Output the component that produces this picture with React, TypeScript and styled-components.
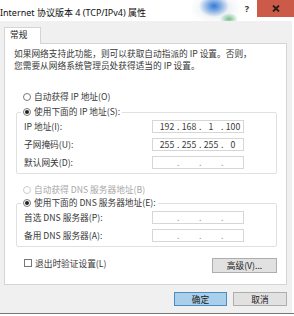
import styled, { createGlobalStyle } from "styled-components";

const GlobalStyle = createGlobalStyle`
  html, body {
    margin: 0;
    padding: 0;
    background: #ffffff;
  }
  * {
    box-sizing: border-box;
  }
`;

const FONT = `"Noto Sans CJK SC", "Noto Sans", sans-serif`;

const Window = styled.div`
  width: 294px;
  height: 316px;
  display: flex;
  flex-direction: column;
  background: #ffffff;
  font-family: ${FONT};
  font-size: 8.7px;
  color: #383838;
  overflow: hidden;
`;

const TitleBar = styled.div`
  height: 21px;
  display: flex;
  align-items: flex-start;
  background:
    radial-gradient(ellipse 9px 6px at 229px 19px, rgba(70, 170, 100, 0.75), rgba(70, 170, 100, 0) 100%),
    radial-gradient(ellipse 15px 11px at 214px 6px, rgba(30, 110, 215, 0.9), rgba(30, 110, 215, 0) 100%),
    radial-gradient(ellipse 26px 16px at 216px 8px, rgba(160, 180, 200, 0.35), rgba(160, 180, 200, 0) 100%),
    #ffffff;
`;

const Title = styled.div`
  flex: 1;
  padding: 7px 0 0 0;
  font-family: "Noto Sans", "Noto Sans CJK SC", sans-serif;
  font-size: 9px;
  line-height: 11px;
  color: #111;
  white-space: nowrap;
`;

const HelpButton = styled.div`
  width: 20px;
  height: 17px;
  display: flex;
  align-items: center;
  justify-content: center;
  font-family: "Noto Sans", sans-serif;
  font-weight: bold;
  font-size: 9px;
  color: #333;
`;

const CloseButton = styled.div`
  width: 37px;
  height: 17px;
  display: flex;
  align-items: center;
  justify-content: center;
  background: #cc5a49;
`;

const Body = styled.div`
  height: 292px;
  margin-right: 2px;
  background: #f0f0f0;
  padding: 6px 5px 0 4px;
  display: flex;
  flex-direction: column;
`;

const BottomLine = styled.div`
  height: 1px;
  background: #767676;
`;

const TabStrip = styled.div`
  display: flex;
  margin-bottom: -1px;
`;

const Tab = styled.div`
  position: relative;
  z-index: 1;
  width: 37px;
  height: 17px;
  background: #ffffff;
  border: 1px solid #d4d4d4;
  border-bottom: none;
  padding: 1px 0 0 5px;
  line-height: 12px;
  color: #1a1a1a;
`;

const Panel = styled.div`
  height: 242px;
  background: #ffffff;
  border: 1px solid #d4d4d4;
  padding: 4px 9px 0 9px;
  display: flex;
  flex-direction: column;
`;

const Description = styled.div`
  line-height: 12px;
  white-space: nowrap;
`;

const RadioRow = styled.label<{ $disabled?: boolean }>`
  display: flex;
  align-items: center;
  gap: 3px;
  height: 12px;
  line-height: 12px;
  white-space: nowrap;
  color: ${(p) => (p.$disabled ? "#a8a8a8" : "#383838")};
`;

const Radio = styled.span<{ $checked?: boolean; $disabled?: boolean }>`
  width: 8px;
  height: 8px;
  border-radius: 50%;
  border: 1px solid ${(p) => (p.$disabled ? "#cccccc" : "#7a7a7a")};
  background: #ffffff;
  display: flex;
  align-items: center;
  justify-content: center;
  &::after {
    content: "";
    width: 4px;
    height: 4px;
    border-radius: 50%;
    background: ${(p) => (p.$checked ? "#222" : "transparent")};
  }
`;

const AutoRow = styled.div<{ $top: number }>`
  margin: ${(p) => p.$top}px 0 0 9px;
`;

const Group = styled.fieldset<{ $top: number }>`
  margin: ${(p) => p.$top}px 0 0 2px;
  border: 1px solid #e0e0e0;
  border-radius: 2px;
  padding: 2px 7px 4px 7px;
  min-width: 0;
`;

const Legend = styled.legend`
  margin-left: -3px;
  padding: 0 2px;
  line-height: 12px;
`;

const Rows = styled.div`
  display: flex;
  flex-direction: column;
  gap: 5px;
`;

const FieldRow = styled.div`
  display: grid;
  grid-template-columns: 128px 92px;
  align-items: center;
  height: 13px;
`;

const FieldLabel = styled.span`
  white-space: nowrap;
  line-height: 13px;
`;

const IpBox = styled.div`
  height: 13px;
  border: 1px solid #d6d6d6;
  background: #ffffff;
  display: flex;
  align-items: center;
  padding-left: 4px;
`;

const Segment = styled.span`
  width: 20px;
  text-align: center;
  line-height: 11px;
  color: #3a3a3a;
`;

const Dot = styled.span<{ $empty?: boolean }>`
  width: 2px;
  text-align: center;
  line-height: 11px;
  color: ${(p) => (p.$empty ? "#9a9a9a" : "#3a3a3a")};
`;

const FooterRow = styled.div`
  margin-top: 11px;
  display: flex;
  justify-content: space-between;
  align-items: flex-start;
`;

const CheckRow = styled.label`
  margin: -1px 0 0 10px;
  display: flex;
  align-items: center;
  gap: 3px;
  height: 12px;
  white-space: nowrap;
`;

const CheckBox = styled.span`
  width: 8px;
  height: 8px;
  border: 1px solid #777;
  background: #fff;
`;

const Button = styled.div<{ $width: number; $height: number; $primary?: boolean }>`
  width: ${(p) => p.$width}px;
  height: ${(p) => p.$height}px;
  display: flex;
  align-items: center;
  justify-content: center;
  background: ${(p) => (p.$primary ? "#a9cfea" : "#e1e1e1")};
  border: 1px solid ${(p) => (p.$primary ? "#4a8cc4" : "#adadad")};
  color: #1a1a1a;
  white-space: nowrap;
`;

const ButtonRow = styled.div`
  margin-top: 7px;
  display: flex;
  justify-content: flex-end;
  gap: 6px;
`;

const IpField = ({ value }: { value?: string[] }) => {
  const parts = value ?? ["", "", "", ""];
  return (
    <IpBox>
      {parts.map((part, i) => (
        <span key={i} style={{ display: "contents" }}>
          {i > 0 && <Dot $empty={!value}>.</Dot>}
          <Segment>{part}</Segment>
        </span>
      ))}
    </IpBox>
  );
};

const App = () => {
  return (
    <>
      <GlobalStyle />
      <Window>
        <TitleBar>
          <Title>Internet 协议版本 4 (TCP/IPv4) 属性</Title>
          <HelpButton>?</HelpButton>
          <CloseButton>
            <svg width="8" height="7" viewBox="0 0 8 7">
              <path d="M1 0.5 L7 6.5 M7 0.5 L1 6.5" stroke="#2b1a16" strokeWidth="1.8" />
            </svg>
          </CloseButton>
        </TitleBar>

        <Body>
          <TabStrip>
            <Tab>常规</Tab>
          </TabStrip>
          <Panel>
            <Description>
              如果网络支持此功能，则可以获取自动指派的 IP 设置。否则，
              <br />
              您需要从网络系统管理员处获得适当的 IP 设置。
            </Description>

            <AutoRow $top={19}>
              <RadioRow>
                <Radio />
                自动获得 IP 地址(O)
              </RadioRow>
            </AutoRow>

            <Group $top={3}>
              <Legend>
                <RadioRow>
                  <Radio $checked />
                  使用下面的 IP 地址(S):
                </RadioRow>
              </Legend>
              <Rows>
                <FieldRow>
                  <FieldLabel>IP 地址(I):</FieldLabel>
                  <IpField value={["192", "168", "1", "100"]} />
                </FieldRow>
                <FieldRow>
                  <FieldLabel>子网掩码(U):</FieldLabel>
                  <IpField value={["255", "255", "255", "0"]} />
                </FieldRow>
                <FieldRow>
                  <FieldLabel>默认网关(D):</FieldLabel>
                  <IpField />
                </FieldRow>
              </Rows>
            </Group>

            <AutoRow $top={10}>
              <RadioRow $disabled>
                <Radio $disabled />
                自动获得 DNS 服务器地址(B)
              </RadioRow>
            </AutoRow>

            <Group $top={1}>
              <Legend>
                <RadioRow>
                  <Radio $checked />
                  使用下面的 DNS 服务器地址(E):
                </RadioRow>
              </Legend>
              <Rows>
                <FieldRow>
                  <FieldLabel>首选 DNS 服务器(P):</FieldLabel>
                  <IpField />
                </FieldRow>
                <FieldRow>
                  <FieldLabel>备用 DNS 服务器(A):</FieldLabel>
                  <IpField />
                </FieldRow>
              </Rows>
            </Group>

            <FooterRow>
              <CheckRow>
                <CheckBox />
                退出时验证设置(L)
              </CheckRow>
              <Button $width={65} $height={15}>
                高级(V)...
              </Button>
            </FooterRow>
          </Panel>

          <ButtonRow>
            <Button $width={53} $height={14} $primary>
              确定
            </Button>
            <Button $width={54} $height={14}>
              取消
            </Button>
          </ButtonRow>
        </Body>
        <BottomLine />
      </Window>
    </>
  );
};

export default App;
